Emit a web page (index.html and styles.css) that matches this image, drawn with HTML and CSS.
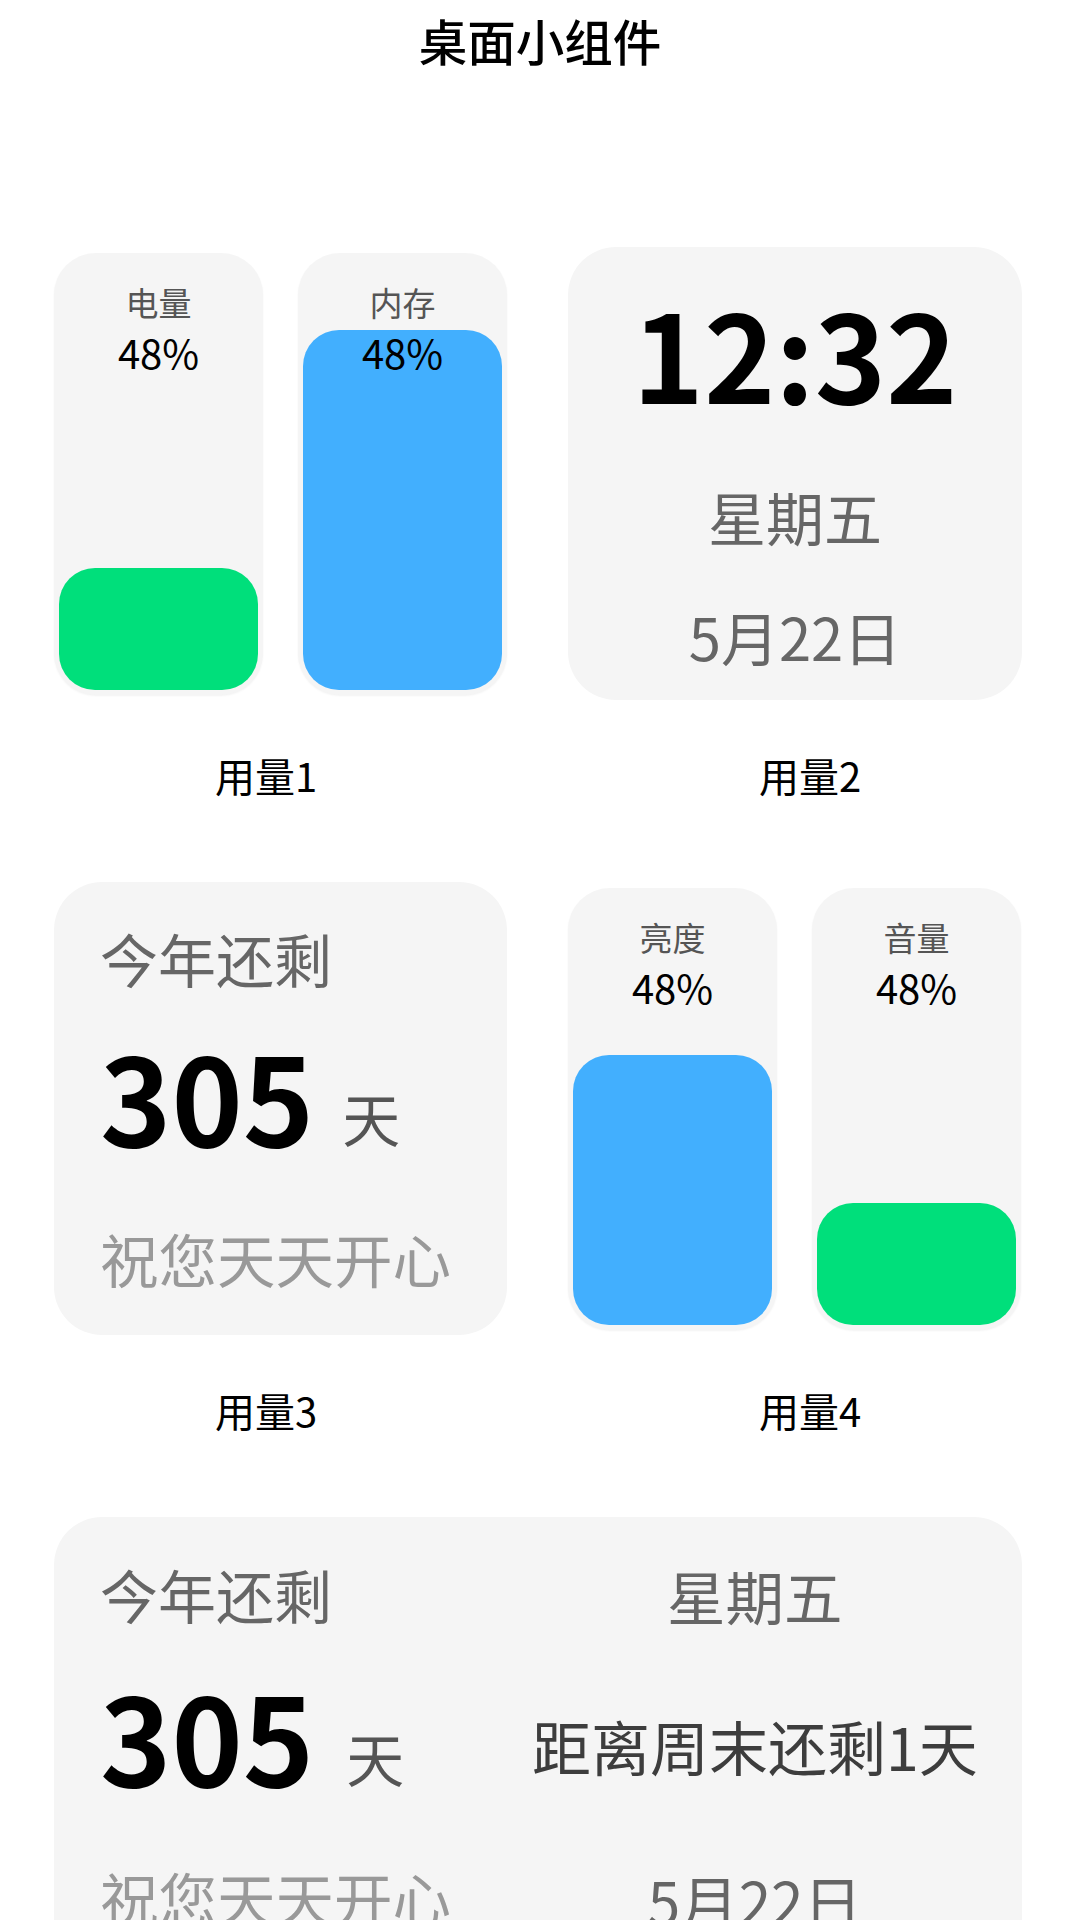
FILE: index.html
```html
<!DOCTYPE html>
<html lang="zh-CN">
<head>
<meta charset="utf-8">
<title>桌面小组件</title>
<link rel="stylesheet" href="styles.css">
</head>
<body>
<div class="page">
  <h1 class="title">桌面小组件</h1>

  <section class="row">
    <div class="cell cell-left">
      <div class="slot">
        <div class="pair">
          <div class="gauge">
            <div class="fill fill-green" style="height:122px"></div>
            <div class="g-name">电量</div>
            <div class="g-val">48%</div>
          </div>
          <div class="gauge">
            <div class="fill fill-blue" style="height:360px"></div>
            <div class="g-name">内存</div>
            <div class="g-val">48%</div>
          </div>
        </div>
      </div>
      <div class="caption">用量1</div>
    </div>
    <div class="cell cell-right">
      <div class="slot">
        <div class="card clock">
          <div class="clock-time">12:32</div>
          <div class="clock-week">星期五</div>
          <div class="clock-date">5月22日</div>
        </div>
      </div>
      <div class="caption">用量2</div>
    </div>
  </section>

  <section class="row">
    <div class="cell cell-left">
      <div class="slot">
        <div class="card countdown">
          <div class="cd-label">今年还剩</div>
          <div class="cd-num"><span class="cd-big">305</span><span class="cd-unit">天</span></div>
          <div class="cd-wish">祝您天天开心</div>
        </div>
      </div>
      <div class="caption">用量3</div>
    </div>
    <div class="cell cell-right">
      <div class="slot">
        <div class="pair">
          <div class="gauge">
            <div class="fill fill-blue" style="height:270px"></div>
            <div class="g-name">亮度</div>
            <div class="g-val">48%</div>
          </div>
          <div class="gauge">
            <div class="fill fill-green" style="height:122px"></div>
            <div class="g-name">音量</div>
            <div class="g-val">48%</div>
          </div>
        </div>
      </div>
      <div class="caption">用量4</div>
    </div>
  </section>

  <section class="wide card">
    <div class="wide-left">
      <div class="cd-label">今年还剩</div>
      <div class="cd-num wide-num"><span class="cd-big">305</span><span class="cd-unit">天</span></div>
      <div class="cd-wish wide-wish">祝您天天开心</div>
    </div>
    <div class="wide-right">
      <div class="w-week">星期五</div>
      <div class="w-weekend">距离周末还剩1天</div>
      <div class="w-date">5月22日</div>
    </div>
  </section>
</div>
</body>
</html>
```

FILE: styles.css
```css
html, body {
  margin: 0;
  padding: 0;
  background: #ffffff;
}

body {
  font-family: "Noto Sans CJK SC", "Noto Sans", sans-serif;
  color: #000;
  overflow: hidden;
}

.page {
  width: 1080px;
}

.title {
  margin: 0 0 167px 0;
  height: 80px;
  line-height: 80px;
  font-size: 48.5px;
  font-weight: 500;
  text-align: center;
  color: #000;
}

.row {
  display: grid;
  grid-template-columns: 540px 540px;
}

.cell {
  display: flex;
  flex-direction: column;
}

.slot {
  height: 453px;
  display: flex;
  align-items: center;
}

.cell-left .slot {
  padding-left: 54px;
}

.cell-right .slot {
  padding-left: 28px;
}

.caption {
  margin-top: 50px;
  margin-bottom: 82px;
  height: 50px;
  line-height: 50px;
  font-size: 40px;
  text-align: center;
  color: #000;
}

.cell-left .caption {
  padding-right: 8px;
}

.card {
  background: #f5f5f5;
  border-radius: 48px;
  box-sizing: border-box;
}

/* gauges */
.pair {
  display: flex;
  gap: 35px;
}

.gauge {
  position: relative;
  width: 209px;
  height: 442px;
  background: #f5f5f5;
  border-radius: 42px;
  box-shadow: 0 1px 2px rgba(0, 0, 0, 0.05);
  display: flex;
  flex-direction: column;
  align-items: center;
  overflow: hidden;
}

.fill {
  position: absolute;
  left: 5px;
  right: 5px;
  bottom: 5px;
  border-radius: 36px;
}

.fill-green {
  background: #00df7b;
}

.fill-blue {
  background: #42affe;
}

.g-name {
  position: relative;
  margin-top: 29px;
  height: 40px;
  line-height: 40px;
  font-size: 33px;
  color: #555;
}

.g-val {
  position: relative;
  margin-top: 5px;
  height: 50px;
  line-height: 50px;
  font-size: 40px;
  color: #000;
}

/* clock */
.clock {
  width: 454px;
  height: 453px;
  display: flex;
  flex-direction: column;
  align-items: center;
}

.clock-time {
  margin-top: 40px;
  height: 130px;
  line-height: 130px;
  font-size: 121px;
  font-weight: 700;
  color: #000;
}

.clock-week {
  margin-top: 64px;
  height: 70px;
  line-height: 70px;
  font-size: 58px;
  color: #666;
}

.clock-date {
  margin-top: 50px;
  height: 70px;
  line-height: 70px;
  font-size: 58px;
  color: #666;
}

/* countdown */
.countdown {
  width: 453px;
  height: 453px;
  padding-left: 46px;
  display: flex;
  flex-direction: column;
  align-items: flex-start;
}

.cd-label {
  margin-top: 41px;
  height: 70px;
  line-height: 70px;
  font-size: 58px;
  color: #666;
}

.cd-num {
  margin-top: 37px;
  height: 130px;
  line-height: 130px;
  font-size: 121px;
  font-weight: 700;
  white-space: nowrap;
}

.cd-big {
  color: #000;
}

.cd-unit {
  margin-left: 28px;
  font-size: 58px;
  font-weight: 400;
  color: #555;
  vertical-align: 5px;
}

.cd-wish {
  margin-top: 63px;
  height: 70px;
  line-height: 70px;
  font-size: 58.5px;
  color: #999;
}

/* wide card */
.wide {
  margin-left: 54px;
  width: 968px;
  height: 453px;
  padding-right: 66px;
  display: grid;
  grid-template-columns: 478px 1fr;
}

.wide-left {
  padding-left: 46px;
  display: flex;
  flex-direction: column;
  align-items: flex-start;
}

.wide-left .cd-label {
  margin-top: 42px;
}

.wide-num {
  margin-top: 41px;
}

.wide-num .cd-unit {
  margin-left: 32px;
}

.wide-wish {
  margin-top: 62px;
}

.wide-right {
  display: flex;
  flex-direction: column;
  align-items: center;
}

.w-week {
  margin-top: 43px;
  height: 70px;
  line-height: 70px;
  font-size: 58.5px;
  color: #666;
}

.w-weekend {
  margin-top: 81px;
  height: 70px;
  line-height: 70px;
  font-size: 59px;
  color: #3d3d3d;
  white-space: nowrap;
}

.w-date {
  margin-top: 84px;
  height: 70px;
  line-height: 70px;
  font-size: 58.5px;
  color: #666;
}
```
